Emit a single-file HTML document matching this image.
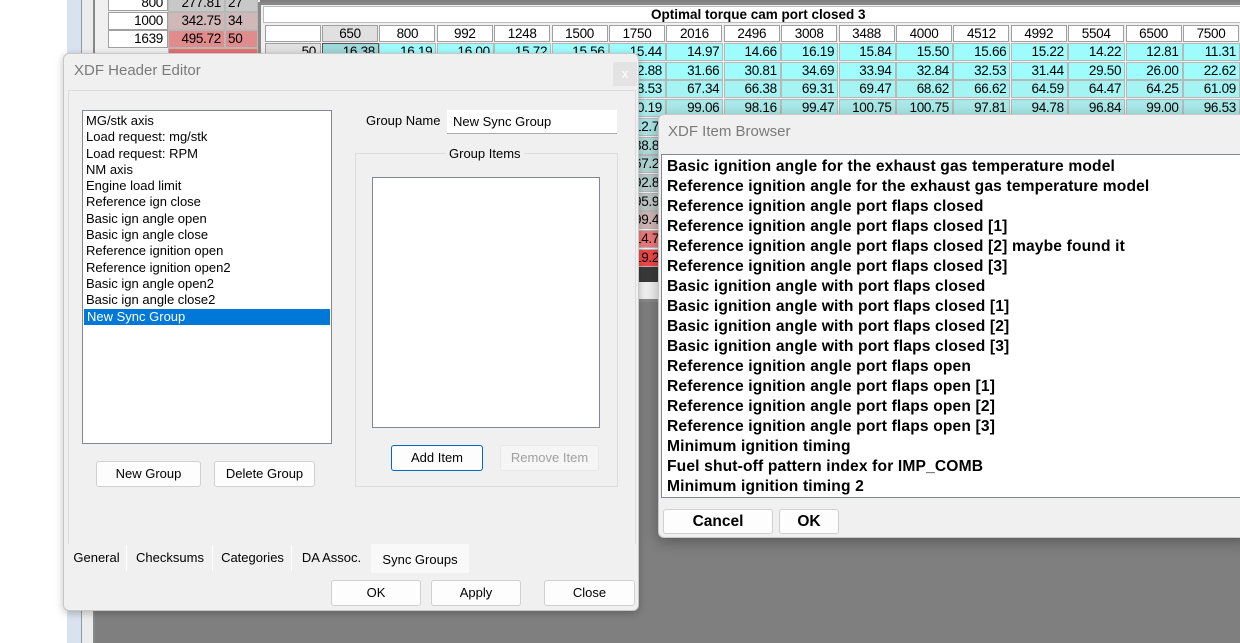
<!DOCTYPE html>
<html><head><meta charset="utf-8"><style>
*{margin:0;padding:0;box-sizing:border-box}
body{width:1240px;height:643px;overflow:hidden;position:relative;background:#7f7f7f;font-family:"Liberation Sans",sans-serif;}
.a{position:absolute}
.c{position:absolute;height:18px;border:1px solid #b8b8b8;font-size:13.5px;line-height:16px;text-align:right;padding-right:3px;color:#000;letter-spacing:-0.3px}
.h{position:absolute;height:17px;border:1px solid #a0a0a0;background:#fff;font-size:13.5px;line-height:15px;text-align:center;letter-spacing:-0.3px}
.btn{position:absolute;background:#fdfdfd;border:1px solid #d0d0d0;border-radius:3px;font-size:13px;text-align:center;line-height:24px;color:#000}
.li{font-size:13px;line-height:16.3px;padding-left:3px;white-space:nowrap}
.ib{font-size:15.6px;font-weight:bold;line-height:20px;white-space:nowrap;padding-left:5px;letter-spacing:0.15px}
.tab{position:absolute;top:545px;height:26px;font-size:13px;line-height:26px;text-align:center;background:#f0f0f0}
.p{position:absolute;left:609px;height:18px;width:60px;border:1px solid #b8b8b8;font-size:13.5px;line-height:16px;padding-left:24px;letter-spacing:-0.3px}
</style></head><body>
<div class="a" style="left:0;top:0;width:67px;height:643px;background:#fff"></div>
<div class="a" style="left:67px;top:0;width:14px;height:643px;background:#d8e3f0"></div>
<div class="a" style="left:81px;top:0;width:14px;height:643px;background:#ececec;border-left:1px solid #999;border-right:2px solid #888"></div>
<div class="a" style="left:95px;top:0;width:165px;height:60px;background:#f0f0f0"></div>
<div class="h" style="left:108px;top:-6px;width:60px;text-align:right;padding-right:4px">800</div>
<div class="h" style="left:108px;top:12px;width:60px;text-align:right;padding-right:4px;height:18px">1000</div>
<div class="h" style="left:108px;top:30px;width:60px;text-align:right;padding-right:4px;height:18px">1639</div>
<div class="c" style="left:168px;top:-6px;width:57px;background:#c8c8c8">277.81</div>
<div class="c" style="left:225px;top:-6px;width:33px;background:#c8c8c8;text-align:left;padding-left:2px">27</div>
<div class="c" style="left:168px;top:12px;width:57px;background:#d0b8b8">342.75</div>
<div class="c" style="left:225px;top:12px;width:33px;background:#d0b8b8;text-align:left;padding-left:2px">34</div>
<div class="c" style="left:168px;top:30px;width:57px;background:#e08c8c">495.72</div>
<div class="c" style="left:225px;top:30px;width:33px;background:#e08c8c;text-align:left;padding-left:2px">50</div>
<div class="c" style="left:168px;top:48px;width:90px;background:#e87070"></div>
<div class="a" style="left:258px;top:2px;width:990px;height:300px;background:#f0f0f0;border:3px solid #888;border-right:none"></div>
<div class="a" style="left:263px;top:6px;width:980px;height:17px;background:#fff;border:1px solid #bbb;font-size:13.5px;font-weight:bold;line-height:15px;padding-left:387px">Optimal torque cam port closed 3</div>
<div class="h" style="left:265px;top:25px;width:56px;background:#fff"></div>
<div class="h" style="left:322px;top:25px;width:56px;background:#e0e0e0">650</div>
<div class="h" style="left:379.4px;top:25px;width:56px">800</div>
<div class="h" style="left:436.8px;top:25px;width:56px">992</div>
<div class="h" style="left:494.2px;top:25px;width:56px">1248</div>
<div class="h" style="left:551.6px;top:25px;width:56px">1500</div>
<div class="h" style="left:609px;top:25px;width:56px">1750</div>
<div class="h" style="left:666.4px;top:25px;width:56px">2016</div>
<div class="h" style="left:723.8px;top:25px;width:56px">2496</div>
<div class="h" style="left:781.2px;top:25px;width:56px">3008</div>
<div class="h" style="left:838.6px;top:25px;width:56px">3488</div>
<div class="h" style="left:896px;top:25px;width:56px">4000</div>
<div class="h" style="left:953.4px;top:25px;width:56px">4512</div>
<div class="h" style="left:1010.8px;top:25px;width:56px">4992</div>
<div class="h" style="left:1068.2px;top:25px;width:56px">5504</div>
<div class="h" style="left:1125.6px;top:25px;width:56px">6500</div>
<div class="h" style="left:1183px;top:25px;width:56px">7500</div>
<div class="h" style="left:265px;top:43px;width:56px;background:#e0e0e0;text-align:right;padding-right:4px">50</div>
<div class="c" style="left:322px;top:43px;width:57px;background:#9fd8d8;border-color:#555">16.38</div>
<div class="c" style="left:379.4px;top:43px;width:57px;background:#9ffcfc">16.19</div>
<div class="c" style="left:436.8px;top:43px;width:57px;background:#9ffcfc">16.00</div>
<div class="c" style="left:494.2px;top:43px;width:57px;background:#9ffcfc">15.72</div>
<div class="c" style="left:551.6px;top:43px;width:57px;background:#9ffcfc">15.56</div>
<div class="c" style="left:609px;top:43px;width:57px;background:#9ffcfc">15.44</div>
<div class="c" style="left:666.4px;top:43px;width:57px;background:#9ffcfc">14.97</div>
<div class="c" style="left:723.8px;top:43px;width:57px;background:#9ffcfc">14.66</div>
<div class="c" style="left:781.2px;top:43px;width:57px;background:#9ffcfc">16.19</div>
<div class="c" style="left:838.6px;top:43px;width:57px;background:#9ffcfc">15.84</div>
<div class="c" style="left:896px;top:43px;width:57px;background:#9ffcfc">15.50</div>
<div class="c" style="left:953.4px;top:43px;width:57px;background:#9ffcfc">15.66</div>
<div class="c" style="left:1010.8px;top:43px;width:57px;background:#9ffcfc">15.22</div>
<div class="c" style="left:1068.2px;top:43px;width:57px;background:#9ffcfc">14.22</div>
<div class="c" style="left:1125.6px;top:43px;width:57px;background:#9ffcfc">12.81</div>
<div class="c" style="left:1183px;top:43px;width:57px;background:#9ffcfc">11.31</div>

<div class="c" style="left:609px;top:61.7px;width:57px;background:#9ffcfc">32.88</div>
<div class="c" style="left:666.4px;top:61.7px;width:57px;background:#9ffcfc">31.66</div>
<div class="c" style="left:723.8px;top:61.7px;width:57px;background:#9ffcfc">30.81</div>
<div class="c" style="left:781.2px;top:61.7px;width:57px;background:#9ffcfc">34.69</div>
<div class="c" style="left:838.6px;top:61.7px;width:57px;background:#9ffcfc">33.94</div>
<div class="c" style="left:896px;top:61.7px;width:57px;background:#9ffcfc">32.84</div>
<div class="c" style="left:953.4px;top:61.7px;width:57px;background:#9ffcfc">32.53</div>
<div class="c" style="left:1010.8px;top:61.7px;width:57px;background:#9ffcfc">31.44</div>
<div class="c" style="left:1068.2px;top:61.7px;width:57px;background:#9ffcfc">29.50</div>
<div class="c" style="left:1125.6px;top:61.7px;width:57px;background:#9ffcfc">26.00</div>
<div class="c" style="left:1183px;top:61.7px;width:57px;background:#9ffcfc">22.62</div>

<div class="c" style="left:609px;top:80.4px;width:57px;background:#a4f4f4">68.53</div>
<div class="c" style="left:666.4px;top:80.4px;width:57px;background:#a4f4f4">67.34</div>
<div class="c" style="left:723.8px;top:80.4px;width:57px;background:#a4f4f4">66.38</div>
<div class="c" style="left:781.2px;top:80.4px;width:57px;background:#a4f4f4">69.31</div>
<div class="c" style="left:838.6px;top:80.4px;width:57px;background:#a4f4f4">69.47</div>
<div class="c" style="left:896px;top:80.4px;width:57px;background:#a4f4f4">68.62</div>
<div class="c" style="left:953.4px;top:80.4px;width:57px;background:#a4f4f4">66.62</div>
<div class="c" style="left:1010.8px;top:80.4px;width:57px;background:#a4f4f4">64.59</div>
<div class="c" style="left:1068.2px;top:80.4px;width:57px;background:#a4f4f4">64.47</div>
<div class="c" style="left:1125.6px;top:80.4px;width:57px;background:#a4f4f4">64.25</div>
<div class="c" style="left:1183px;top:80.4px;width:57px;background:#a4f4f4">61.09</div>

<div class="c" style="left:609px;top:99.1px;width:57px;background:#a8e8e8">100.19</div>
<div class="c" style="left:666.4px;top:99.1px;width:57px;background:#a8e8e8">99.06</div>
<div class="c" style="left:723.8px;top:99.1px;width:57px;background:#a8e8e8">98.16</div>
<div class="c" style="left:781.2px;top:99.1px;width:57px;background:#a8e8e8">99.47</div>
<div class="c" style="left:838.6px;top:99.1px;width:57px;background:#a8e8e8">100.75</div>
<div class="c" style="left:896px;top:99.1px;width:57px;background:#a8e8e8">100.75</div>
<div class="c" style="left:953.4px;top:99.1px;width:57px;background:#a8e8e8">97.81</div>
<div class="c" style="left:1010.8px;top:99.1px;width:57px;background:#a8e8e8">94.78</div>
<div class="c" style="left:1068.2px;top:99.1px;width:57px;background:#a8e8e8">96.84</div>
<div class="c" style="left:1125.6px;top:99.1px;width:57px;background:#a8e8e8">99.00</div>
<div class="c" style="left:1183px;top:99.1px;width:57px;background:#a8e8e8">96.53</div>

<div class="p" style="top:117.8px;background:#a8e4e4">12.75</div>
<div class="p" style="top:136.5px;background:#aedcdc">38.85</div>
<div class="p" style="top:155.2px;background:#b0d4d4">67.25</div>
<div class="p" style="top:173.9px;background:#b6cccc">92.85</div>
<div class="p" style="top:192.6px;background:#bcc4c4">95.95</div>
<div class="p" style="top:211.3px;background:#d0b6b6">99.45</div>
<div class="p" style="top:230px;background:#ec7a7a">14.75</div>
<div class="p" style="top:248.7px;background:#f04848">19.25</div>
<div class="a" style="left:609px;top:267px;width:60px;height:15px;background:#3a3a3a"></div>

<div class="a" style="left:63px;top:53px;width:576px;height:558px;background:#f0f0f0;border:1px solid #c8c8c8;border-radius:6px;box-shadow:0 2px 8px rgba(0,0,0,.25)"></div>
<div class="a" style="left:74px;top:62px;font-size:15px;color:#7a7a7a">XDF Header Editor</div>
<div class="a" style="left:613px;top:62px;width:24px;height:24px;background:#e3e3e3;color:#fff;font-size:13px;text-align:center;line-height:24px">x</div>
<div class="a" style="left:68px;top:90px;width:568px;height:454px;background:#f0f0f0;border:1px solid #dcdcdc;border-bottom:none"></div>
<div class="a" style="left:82px;top:110px;width:250px;height:334px;background:#fff;border:1px solid #828790;padding-top:2px">
<div class="li">MG/stk axis</div><div class="li">Load request: mg/stk</div><div class="li">Load request: RPM</div><div class="li">NM axis</div><div class="li">Engine load limit</div><div class="li">Reference ign close</div><div class="li">Basic ign angle open</div><div class="li">Basic ign angle close</div><div class="li">Reference ignition open</div><div class="li">Reference ignition open2</div><div class="li">Basic ign angle open2</div><div class="li">Basic ign angle close2</div><div class="li" style="background:#0078d7;color:#fff;margin:0 1px">New Sync Group</div>
</div>
<div class="btn" style="left:96px;top:461px;width:105px;height:26px">New Group</div>
<div class="btn" style="left:214px;top:461px;width:101px;height:26px">Delete Group</div>
<div class="a" style="left:366px;top:113px;font-size:13px">Group Name</div>
<div class="a" style="left:447px;top:110px;width:170px;height:24px;background:#fff;border-bottom:1px solid #aaa;font-size:13px;line-height:24px;padding-left:6px">New Sync Group</div>
<div class="a" style="left:355px;top:153px;width:263px;height:334px;border:1px solid #dcdcdc"></div>
<div class="a" style="left:446px;top:146px;font-size:13px;background:#f0f0f0;padding:0 3px">Group Items</div>
<div class="a" style="left:372px;top:177px;width:228px;height:251px;background:#fff;border:1px solid #828790"></div>
<div class="btn" style="left:391px;top:445px;width:92px;height:26px;border:1px solid #0067c0">Add Item</div>
<div class="btn" style="left:500px;top:445px;width:99px;height:26px;background:#f5f5f5;border-color:#e8e8e8;color:#a0a0a0">Remove Item</div>
<div class="tab" style="left:67px;width:60px;border-right:1px solid #fff">General</div>
<div class="tab" style="left:128px;width:85px;border-right:1px solid #fff">Checksums</div>
<div class="tab" style="left:214px;width:78px;border-right:1px solid #fff">Categories</div>
<div class="tab" style="left:293px;width:77px">DA Assoc.</div>
<div class="tab" style="left:371px;width:98px;top:544px;height:29px;line-height:31px;background:#f9f9f9">Sync Groups</div>
<div class="btn" style="left:331px;top:580px;width:90px;height:26px">OK</div>
<div class="btn" style="left:431px;top:580px;width:90px;height:26px">Apply</div>
<div class="btn" style="left:544px;top:580px;width:91px;height:26px">Close</div>

<div class="a" style="left:658px;top:114px;width:590px;height:424px;background:#f0f0f0;border:1px solid #c8c8c8;border-radius:6px 0 0 6px;box-shadow:0 4px 14px rgba(0,0,0,.3)"></div>
<div class="a" style="left:668px;top:123px;font-size:15px;color:#7a7a7a">XDF Item Browser</div>
<div class="a" style="left:661px;top:154px;width:585px;height:344px;background:#fff;border:1px solid #828790;padding-top:2px">
<div class="ib">Basic ignition angle for the exhaust gas temperature model</div>
<div class="ib">Reference ignition angle for the exhaust gas temperature model</div>
<div class="ib">Reference ignition angle port flaps closed</div>
<div class="ib">Reference ignition angle port flaps closed [1]</div>
<div class="ib">Reference ignition angle port flaps closed [2] maybe found it</div>
<div class="ib">Reference ignition angle port flaps closed [3]</div>
<div class="ib">Basic ignition angle with port flaps closed</div>
<div class="ib">Basic ignition angle with port flaps closed [1]</div>
<div class="ib">Basic ignition angle with port flaps closed [2]</div>
<div class="ib">Basic ignition angle with port flaps closed [3]</div>
<div class="ib">Reference ignition angle port flaps open</div>
<div class="ib">Reference ignition angle port flaps open [1]</div>
<div class="ib">Reference ignition angle port flaps open [2]</div>
<div class="ib">Reference ignition angle port flaps open [3]</div>
<div class="ib">Minimum ignition timing</div>
<div class="ib">Fuel shut-off pattern index for IMP_COMB</div>
<div class="ib">Minimum ignition timing 2</div>
</div>
<div class="btn" style="left:663px;top:509px;width:110px;height:25px;font-weight:bold;font-size:15.5px">Cancel</div>
<div class="btn" style="left:779px;top:509px;width:60px;height:25px;font-weight:bold;font-size:15.5px">OK</div>
</body></html>
